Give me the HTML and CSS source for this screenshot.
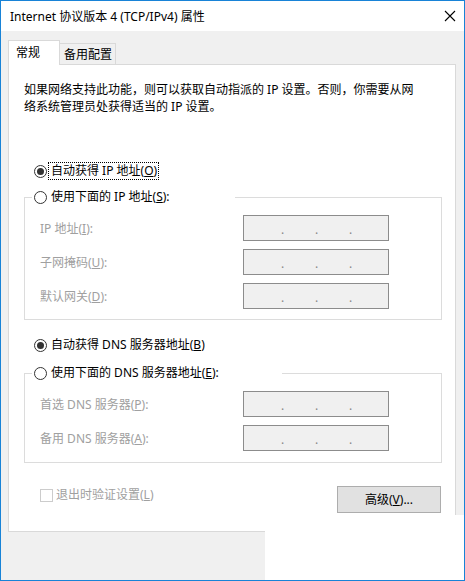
FILE: index.html
```html
<!DOCTYPE html>
<html lang="zh-CN">
<head>
<meta charset="utf-8">
<title>Internet 协议版本 4 (TCP/IPv4) 属性</title>
<link rel="stylesheet" href="styles.css">
</head>
<body>
<div class="window">
  <div class="titlebar">
    <span class="title">Internet 协议版本 4 (TCP/IPv4) 属性</span>
    <svg class="close" width="12" height="12" viewBox="0 0 12 12"><path d="M1 1 L11 11 M11 1 L1 11" stroke="#000" stroke-width="1.1" fill="none"/></svg>
  </div>
  <div class="tabs">
    <div class="tab active">常规</div>
    <div class="tab">备用配置</div>
  </div>
  <div class="panel">
    <p class="intro">如果网络支持此功能，则可以获取自动指派的 IP 设置。否则，你需要从网<br>络系统管理员处获得适当的 IP 设置。</p>

    <div class="radio-row first">
      <span class="radio checked"></span>
      <span class="label focus">自动获得 IP 地址(<u>O</u>)</span>
    </div>

    <div class="group g1">
      <div class="legend ip-legend">
        <span class="radio"></span>
        <span class="label">使用下面的 IP 地址(<u>S</u>):</span>
      </div>
      <div class="field"><span class="flabel">IP 地址(<u>I</u>):</span><span class="ip"><i>.</i><i>.</i><i>.</i></span></div>
      <div class="field"><span class="flabel">子网掩码(<u>U</u>):</span><span class="ip"><i>.</i><i>.</i><i>.</i></span></div>
      <div class="field"><span class="flabel">默认网关(<u>D</u>):</span><span class="ip"><i>.</i><i>.</i><i>.</i></span></div>
    </div>

    <div class="radio-row dns">
      <span class="radio checked"></span>
      <span class="label">自动获得 DNS 服务器地址(<u>B</u>)</span>
    </div>

    <div class="group g2">
      <div class="legend dns-legend">
        <span class="radio"></span>
        <span class="label">使用下面的 DNS 服务器地址(<u>E</u>):</span>
      </div>
      <div class="field"><span class="flabel">首选 DNS 服务器(<u>P</u>):</span><span class="ip"><i>.</i><i>.</i><i>.</i></span></div>
      <div class="field"><span class="flabel">备用 DNS 服务器(<u>A</u>):</span><span class="ip"><i>.</i><i>.</i><i>.</i></span></div>
    </div>

    <div class="bottom-row">
      <label class="check"><span class="box"></span><span class="clabel">退出时验证设置(<u>L</u>)</span></label>
      <button class="btn">高级(<u>V</u>)...</button>
    </div>
  </div>
  <div class="watermark"></div>
</div>
</body>
</html>
```

FILE: styles.css
```css
* { box-sizing: border-box; }
html, body { margin: 0; padding: 0; }
body {
  width: 465px;
  height: 581px;
  overflow: hidden;
  font-family: "Segoe UI", "Noto Sans", "Noto Sans CJK SC", sans-serif;
  font-size: 12px;
  color: #000;
  background: #fff;
}
.window {
  position: relative;
  width: 465px;
  height: 581px;
  border: 1px solid #1883d7;
  background: #f0f0f0;
  overflow: hidden;
}
.titlebar {
  height: 30px;
  background: #fff;
  display: flex;
  align-items: center;
  justify-content: space-between;
  padding: 0 8px 0 9px;
}
.title { line-height: 15px; }
.close { display: block; margin-top: -1px; }

.tabs {
  margin-top: 9px;
  height: 24px;
  padding-left: 7px;
  display: flex;
  align-items: flex-end;
}
.tab {
  height: 21px;
  line-height: 15px;
  padding: 3px 0 0 4px;
  width: 57px;
  margin-left: -1px;
  border: 1px solid #d9d9d9;
  border-bottom: none;
  background: #f0f0f0;
}
.tab.active {
  position: relative;
  z-index: 1;
  margin-left: 0;
  width: 52px;
  height: 25px;
  margin-bottom: -1px;
  padding: 4px 0 0 7px;
  background: #fff;
}

.panel {
  margin-left: 7px;
  width: 448px;
  height: 468px;
  background: #fff;
  border: 1px solid #d9d9d9;
  display: flex;
  flex-direction: column;
}
.intro {
  margin: 16px 0 0 15px;
  line-height: 17px;
}

.radio-row, .legend {
  display: flex;
  align-items: center;
  height: 16px;
}
.radio-row { padding-left: 25px; }
.radio-row.first { margin-top: 48px; }
.radio-row.dns { margin-top: 17px; }

.radio {
  width: 13px;
  height: 13px;
  border: 1px solid #333;
  border-radius: 50%;
  background: #fff;
  display: flex;
  align-items: center;
  justify-content: center;
  flex: none;
}
.radio.checked::after {
  content: "";
  width: 7px;
  height: 7px;
  border-radius: 50%;
  background: #333;
}
.label {
  margin-left: 2px;
  padding: 0 1px 0 2px;
  line-height: 16px;
  white-space: nowrap;
}
.label.focus { outline: 1px dotted #000; outline-offset: 0; }

.group {
  margin: 0 13px 0 15px;
  border: 1px solid #dcdcdc;
  display: flex;
  flex-direction: column;
  gap: 8px;
}
.g1 { margin-top: 18px; padding-bottom: 10px; }
.g2 { margin-top: 20px; padding-bottom: 11px; }
.legend {
  margin: -9px 0 2px 7px;
  padding-left: 2px;
  background: #fff;
}
.ip-legend { width: 203px; }
.dns-legend { width: 250px; }

.field {
  display: flex;
  align-items: center;
  height: 26px;
}
.flabel {
  width: 218px;
  padding-left: 15px;
  color: #a0a0a0;
  white-space: nowrap;
}
.ip {
  width: 146px;
  height: 26px;
  border: 1px solid #8c8c8c;
  background: #f0f0f0;
  display: flex;
  align-items: center;
  padding: 3px 0 0 37px;
  gap: 31px;
  color: #888;
}
.ip i { font-style: normal; width: 3px; line-height: 12px; }

.bottom-row {
  margin: 23px 14px 0 31px;
  display: flex;
  justify-content: space-between;
  align-items: flex-start;
}
.check {
  display: flex;
  align-items: center;
  margin-top: 1px;
  height: 16px;
}
.box {
  width: 13px;
  height: 13px;
  border: 1px solid #cccccc;
  background: #fff;
}
.clabel {
  margin-left: 3px;
  color: #a0a0a0;
  line-height: 16px;
}
.btn {
  width: 104px;
  height: 27px;
  border: 1px solid #adadad;
  background: #e1e1e1;
  font: inherit;
  color: #000;
  padding: 0;
  line-height: 15px;
}

.watermark {
  position: absolute;
  left: 264px;
  top: 514px;
  width: 201px;
  height: 67px;
  background: #fff;
}
```
